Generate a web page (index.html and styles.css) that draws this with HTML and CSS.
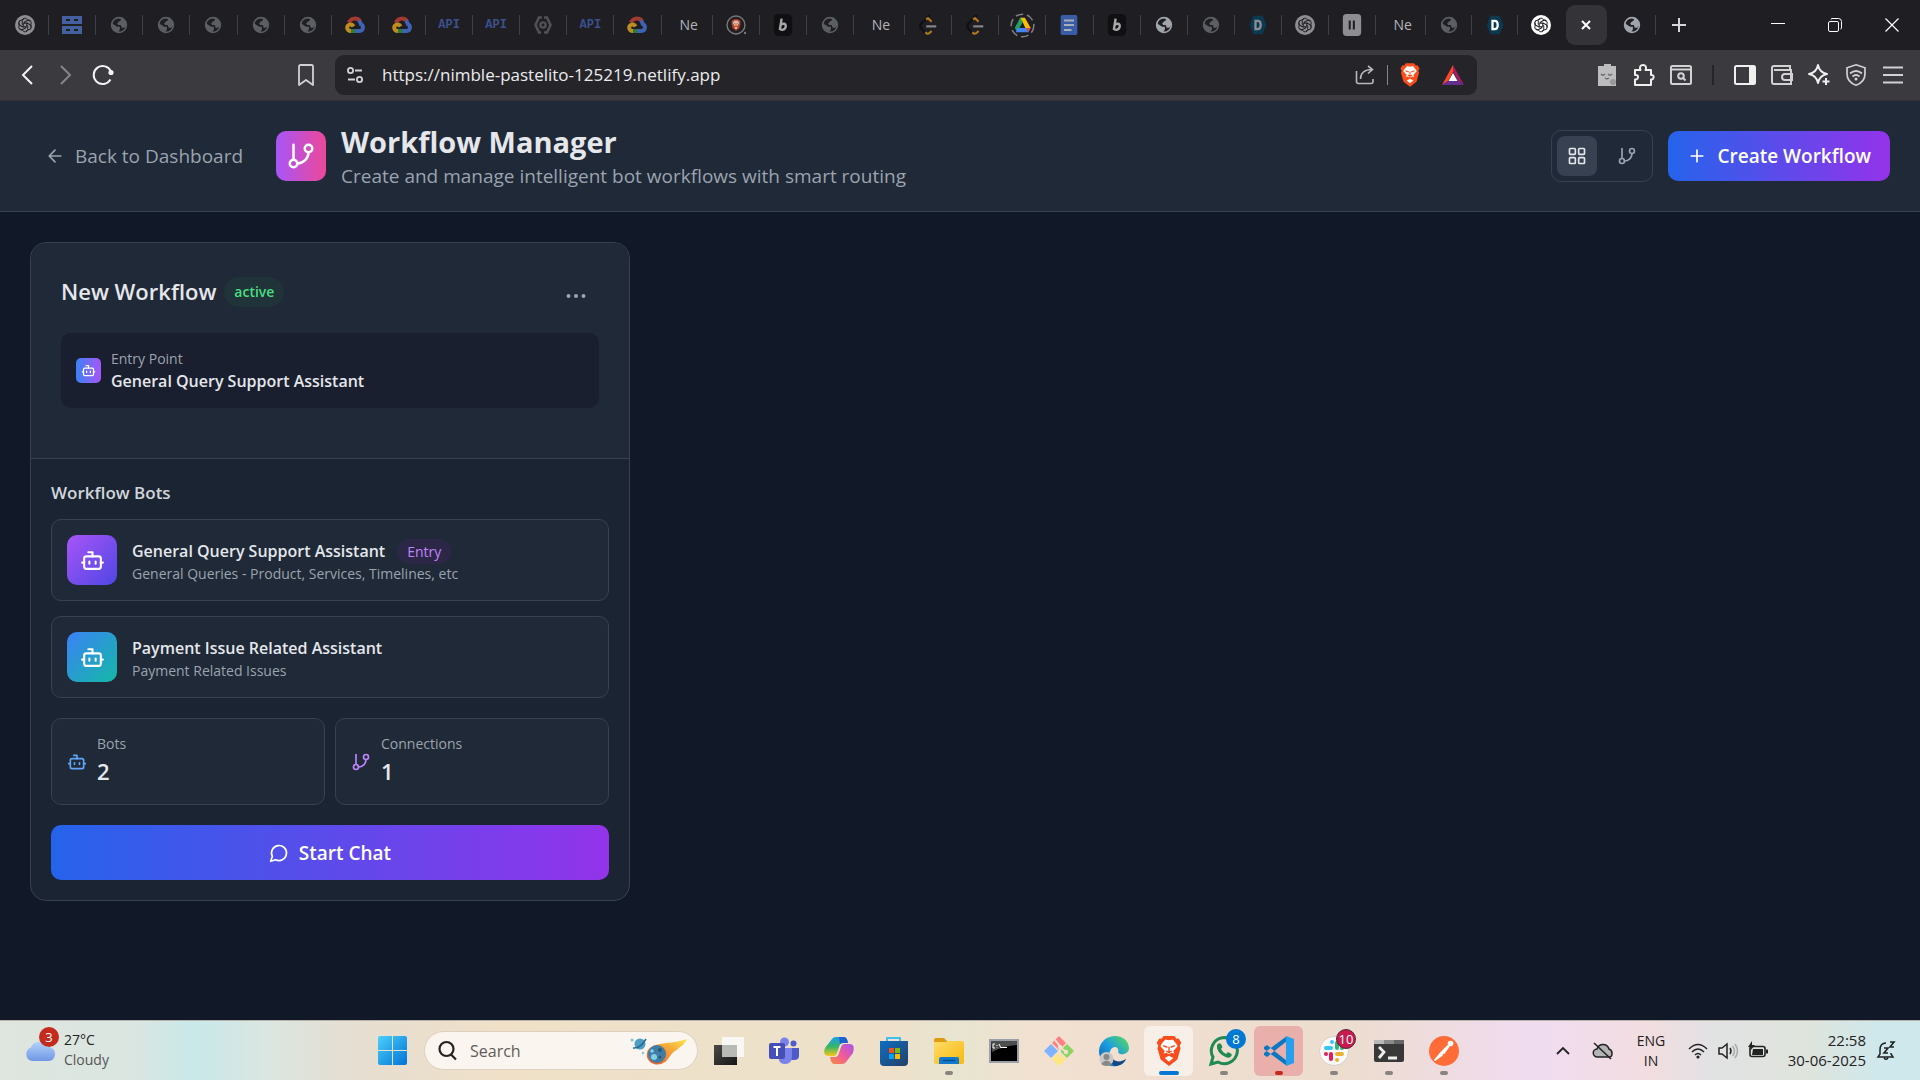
FILE: index.html
```html
<!DOCTYPE html>
<html lang="en">
<head>
<meta charset="utf-8">
<title>Workflow Manager</title>
<link rel="stylesheet" href="styles.css">
</head>
<body>
<svg class="sprite" aria-hidden="true">
  <defs>
    <linearGradient id="g-win" x1="0" y1="0" x2="1" y2="1"><stop offset="0" stop-color="#4cd0fb"/><stop offset="1" stop-color="#0073d6"/></linearGradient>
    <linearGradient id="g-edge" x1="0" y1="1" x2="1" y2="0"><stop offset="0" stop-color="#0c59a4"/><stop offset=".5" stop-color="#1b9de2"/><stop offset="1" stop-color="#5be04f"/></linearGradient>
    <linearGradient id="g-copA" x1="0" y1="0" x2="0" y2="1"><stop offset="0" stop-color="#15a0ee"/><stop offset=".5" stop-color="#35b56a"/><stop offset="1" stop-color="#f5c816"/></linearGradient>
    <linearGradient id="g-copB" x1="1" y1="0" x2="0" y2="1"><stop offset="0" stop-color="#a455ee"/><stop offset=".5" stop-color="#ee5a9c"/><stop offset="1" stop-color="#fb8a3c"/></linearGradient>
    <linearGradient id="g-store" x1="0" y1="0" x2="1" y2="1"><stop offset="0" stop-color="#0c6fc4"/><stop offset="1" stop-color="#263f68"/></linearGradient>
    <linearGradient id="g-folder" x1="0" y1="0" x2="1" y2="1"><stop offset="0" stop-color="#ffdc68"/><stop offset="1" stop-color="#f8b80e"/></linearGradient>
    <linearGradient id="g-flame" x1="0" y1="1" x2="1" y2="0"><stop offset="0" stop-color="#e8502c"/><stop offset=".5" stop-color="#f59a34"/><stop offset="1" stop-color="#fbe64a"/></linearGradient>
    <linearGradient id="g-cloud" x1="0" y1="0" x2="0" y2="1"><stop offset="0" stop-color="#b4d2fa"/><stop offset="1" stop-color="#6f98e6"/></linearGradient>
    <linearGradient id="g-dark" x1="0" y1="0" x2="1" y2="1"><stop offset="0" stop-color="#4a4a48"/><stop offset="1" stop-color="#161616"/></linearGradient>
  </defs>
  <symbol id="knot" viewBox="0 0 24 24"><circle cx="12" cy="12" r="12" fill="currentColor"/><g fill="none" stroke="#222226" stroke-width="1.2"><path id="knot-a" d="M12 9.5 8.7 11.3V6.8A3.2 3.2 0 0 1 14.6 5.3L18 7.4"/><use href="#knot-a" transform="rotate(60 12 12)"/><use href="#knot-a" transform="rotate(120 12 12)"/><use href="#knot-a" transform="rotate(180 12 12)"/><use href="#knot-a" transform="rotate(240 12 12)"/><use href="#knot-a" transform="rotate(300 12 12)"/></g></symbol>
  <symbol id="servers" viewBox="0 0 20 20"><path fill="#45609f" d="M0 1h20v8H0zM0 11h20v8H0z"/><path fill="#1f1e23" d="M4 4h4v2H4zM12 4h4v2h-4zM4 14h4v2H4zM12 14h4v2h-4z"/></symbol>
  <symbol id="globe" viewBox="0 0 20 20"><circle cx="10" cy="10" r="8.2" fill="none" stroke="currentColor" stroke-width="1.8"/><path fill="currentColor" d="M9 2c5-1 9 3 9 8l-2 3h-3l-1-3H9l-1-2 2-2 2-1V3zM2 8l6 4h3v3l-2 3C4 18 1 13 2 8z"/></symbol>
  <symbol id="gcloud" viewBox="0 0 20 18"><g fill="none" stroke-width="4"><path stroke="#a23a30" d="M3.8 6.6A6.6 6.6 0 0 1 15 5"/><path stroke="#3e63b4" d="M14 4.5C15.3 6 15.5 7 15.8 8 19 9.5 18.5 15 14.5 15H10"/><path stroke="#2d7a40" d="M10.500 15H5.500"/><path stroke="#bd8d20" d="M6 15C1 15 1 8.500 5.500 8.500 7 8.500 8 9.500 8.500 10.500"/></g></symbol>
  <symbol id="hexgear" viewBox="0 0 20 20"><path d="M9 2.500H6L2.500 10 6 17.500h2M11 2.500h3L17.500 10 14 17.500h-3" fill="none" stroke="#505055" stroke-width="2.600"/><circle cx="10" cy="10" r="2.600" fill="none" stroke="#505055" stroke-width="2.400"/></symbol>
  <symbol id="lion" viewBox="0 0 24 28"><path fill="#fb4d1c" d="M7 0h10l2 2.500 2-.2 2.500 4L22 9l.8 2.500-3 10.500L12 28l-7.800-6L1.200 11.500 2 9 .5 6.300 3 2.300l2 .2z"/><path fill="#fff" d="m12 4 3.500-.8L19 7.500l1 2-4 4.500 1 2.500-2.500-.8L12 17l-2.500-1.300-2.500.8L8 14 4 9.500l1-2 3.500-4.300zM12 18.500l4 2-4 3.500-4-3.500z"/><path stroke="#fb4d1c" stroke-width="1.300" fill="none" d="m6.500 9 4 1.500M17.500 9l-4 1.500M12 10v5M9.500 14l2.500 1.500 2.500-1.500"/></symbol>
  <symbol id="bsq" viewBox="0 0 20 24"><rect width="20" height="24" rx="5" fill="#101012"/><path d="M8.500 5 6.500 17.500M7.300 12.500C9 9.800 13.500 9.800 13 13.500 12.500 17.500 8 18.200 6.500 16" fill="none" stroke="#a8a8aa" stroke-width="2.600"/></symbol>
  <symbol id="leet" viewBox="0 0 20 24"><g fill="none" stroke-width="2.400"><path stroke="#101012" d="M12 1 3 10c-2 2-2 4 0 6l4 5"/><path stroke="#ad7621" d="m8 6 2-1.500 4 4M7 20l2 1.500c2 .5 3-1 5-3"/><path stroke="#85858a" d="M8 13.500h11"/></g></symbol>
  <symbol id="drive" viewBox="0 0 26 26"><circle cx="13" cy="13" r="11.800" fill="none" stroke="#7d7d82" stroke-width="1.600" stroke-dasharray="8 4"/><path fill="#1ea362" d="M10.500 5h3l-1 6-5 8.500-2.500-4z"/><path fill="#fbbc04" d="M11 5h4.500l6 10.500H16z"/><path fill="#4285f4" d="M8 15.500h13.500L19 20H6z"/><path fill="#ea4335" d="M17 15.500h4.500L19 20z"/></symbol>
  <symbol id="docs" viewBox="0 0 20 24"><rect width="20" height="24" rx="2" fill="#3a5ca6"/><path stroke="#a9adb6" stroke-width="2.400" d="M4 6.500h12M4 12h12M4 18h9"/></symbol>
  <symbol id="dhex" viewBox="0 0 20 24"><path fill="#0b3a50" d="M4.500 1h11L20 12l-4.500 11h-11L0 12z"/><path fill="none" stroke="currentColor" stroke-width="2.800" d="M7 7h2.500c5 0 5 10 0 10H7z"/></symbol>
  <symbol id="pausesq" viewBox="0 0 20 24"><rect width="20" height="24" rx="4" fill="#8e8e92"/><path stroke="#1f1e23" stroke-width="2.200" d="M7.500 7v10M12 7v10"/></symbol>
  <symbol id="branch" viewBox="0 0 24 24"><g fill="none" stroke="currentColor" stroke-width="2" stroke-linecap="round"><path d="M6 3v12"/><circle cx="18" cy="6" r="3"/><circle cx="6" cy="18" r="3"/><path d="M18 9a9 9 0 0 1-9 9"/></g></symbol>
  <symbol id="bot" viewBox="0 0 24 24"><g fill="none" stroke="currentColor" stroke-width="2" stroke-linecap="round" stroke-linejoin="round"><path d="M12 8V4H8"/><rect x="4" y="8" width="16" height="12" rx="2"/><path d="M2 14h2M20 14h2M15 13v2M9 13v2"/></g></symbol>
</svg>

<header class="browser">
  <div class="tabstrip">
    <div class="tabs">
      <button class="tab dim"><svg class="i20"><use href="#knot"/></svg></button>
      <button class="tab"><svg class="i20"><use href="#servers"/></svg></button>
      <button class="tab"><svg class="globe"><use href="#globe"/></svg></button>
      <button class="tab"><svg class="globe"><use href="#globe"/></svg></button>
      <button class="tab"><svg class="globe"><use href="#globe"/></svg></button>
      <button class="tab"><svg class="globe"><use href="#globe"/></svg></button>
      <button class="tab"><svg class="globe"><use href="#globe"/></svg></button>
      <button class="tab"><svg class="i20"><use href="#gcloud"/></svg></button>
      <button class="tab"><svg class="i20"><use href="#gcloud"/></svg></button>
      <button class="tab api">API</button>
      <button class="tab api">API</button>
      <button class="tab"><svg class="i20"><use href="#hexgear"/></svg></button>
      <button class="tab api">API</button>
      <button class="tab"><svg class="i20"><use href="#gcloud"/></svg></button>
      <button class="tab title">Ne</button>
      <button class="tab"><svg class="i20" viewBox="0 0 20 20"><circle cx="10" cy="10" r="9" fill="none" stroke="#77777c" stroke-width="1.400"/><svg x="5" y="4" width="10" height="12"><use href="#lion" opacity=".75"/></svg><circle cx="19" cy="18" r="1.200" fill="#77777c"/></svg></button>
      <button class="tab"><svg class="i22"><use href="#bsq"/></svg></button>
      <button class="tab"><svg class="globe"><use href="#globe"/></svg></button>
      <button class="tab title">Ne</button>
      <button class="tab"><svg class="i22"><use href="#leet"/></svg></button>
      <button class="tab"><svg class="i22"><use href="#leet"/></svg></button>
      <button class="tab"><svg class="i25"><use href="#drive"/></svg></button>
      <button class="tab"><svg class="i20"><use href="#docs"/></svg></button>
      <button class="tab"><svg class="i22"><use href="#bsq"/></svg></button>
      <button class="tab"><svg class="globe lit"><use href="#globe"/></svg></button>
      <button class="tab"><svg class="globe"><use href="#globe"/></svg></button>
      <button class="tab dim"><svg class="i20"><use href="#dhex"/></svg></button>
      <button class="tab dim"><svg class="i20"><use href="#knot"/></svg></button>
      <button class="tab"><svg class="i22"><use href="#pausesq"/></svg></button>
      <button class="tab late title">Ne</button>
      <button class="tab late"><svg class="globe"><use href="#globe"/></svg></button>
      <button class="tab late white"><svg class="i20"><use href="#dhex"/></svg></button>
      <button class="tab late white bare"><svg class="i20"><use href="#knot"/></svg></button>
      <button class="tab late white bare" aria-label="Close tab"><span class="chip"><svg class="i12" viewBox="0 0 12 12"><path d="m2 2 8 8M10 2l-8 8" stroke="currentColor" stroke-width="2"/></svg></span></button>
      <button class="tab late"><svg class="globe lit"><use href="#globe"/></svg></button>
    </div>
    <div class="window-controls">
      <button class="new-tab" aria-label="New tab"><svg class="i14" viewBox="0 0 14 14"><path d="M7 0v14M0 7h14" stroke="#d6d6d8" stroke-width="2"/></svg></button>
      <button class="wc" aria-label="Minimize"><svg class="i14" viewBox="0 0 14 14"><path d="M0 5.500h14" stroke="#fff"/></svg></button>
      <button class="wc" aria-label="Restore"><svg class="i14" viewBox="0 0 14 14"><g fill="none" stroke="#fff"><rect x=".5" y="3.500" width="10" height="10" rx="1.500"/><path d="M3 1.500c0-.6.5-1 1-1h6.500a3 3 0 0 1 3 3V10c0 .5-.4 1-1 1"/></g></svg></button>
      <button class="wc" aria-label="Close"><svg class="i14" viewBox="0 0 14 14"><path d="m.5.5 13 13M13.500.5l-13 13" stroke="#fff" stroke-width="1.200"/></svg></button>
    </div>
  </div>

  <div class="toolbar">
    <div class="nav-buttons">
      <button aria-label="Back"><svg class="i20" viewBox="0 0 20 20"><path d="M14 1 5 10l9 9" fill="none" stroke="#f3f3f4" stroke-width="2"/></svg></button>
      <button aria-label="Forward"><svg class="i20" viewBox="0 0 20 20"><path d="m6 1 9 9-9 9" fill="none" stroke="#85858a" stroke-width="2"/></svg></button>
      <button aria-label="Reload"><svg class="i22" viewBox="0 0 22 22"><path d="M18.500 15.500A9 9 0 1 1 19 7.500" fill="none" stroke="#f3f3f4" stroke-width="2"/><circle cx="19" cy="8.500" r="2.600" fill="#f3f3f4"/></svg></button>
    </div>
    <button class="bookmark" aria-label="Bookmark"><svg class="i22" viewBox="0 0 22 22"><path d="M4 2.500C4 1.700 4.700 1 5.500 1h11c.8 0 1.500.7 1.500 1.500V21l-7-5-7 5z" fill="none" stroke="#d2d2d4" stroke-width="1.800" stroke-linejoin="round"/></svg></button>
    <div class="address">
      <svg class="i18" viewBox="0 0 18 18"><g fill="none" stroke="#d2d2d4" stroke-width="1.800"><circle cx="4.500" cy="4.500" r="2.600"/><path d="M9 4.500h7M2 13.500h7"/><circle cx="13.500" cy="13.500" r="2.600"/></g></svg>
      <input class="url" type="text" aria-label="Address" value="https://nimble-pastelito-125219.netlify.app">
      <button aria-label="Share"><svg class="i20" viewBox="0 0 20 20"><g fill="none" stroke="#b9b9bc" stroke-width="1.600"><path d="M1.500 6v10.500c0 1.200.8 2 2 2H16c1.200 0 2-.8 2-2V14"/><path d="M5.500 14c0-6 4-9.500 11.500-9.500M13 1l4.500 3.500L13 8.500"/></g></svg></button>
      <span class="rule"></span>
      <button aria-label="Shields"><svg class="lion"><use href="#lion"/></svg></button>
      <button aria-label="Rewards"><svg class="i22" viewBox="0 0 22 20"><path fill="#ff4724" d="M11 0 0 20l6-4 5-9z"/><path fill="#9e1f63" d="m11 0 11 20-6-4-5-9z"/><path fill="#662d91" d="M0 20h22l-6-4H6z"/><path fill="#fff" d="m11 8 4.500 8h-9z"/></svg></button>
    </div>
    <div class="tools">
      <button aria-label="Extension"><svg class="i22" viewBox="0 0 22 22"><path fill="#bcbcbe" d="M8 0h7v2h5v20H2V2h6z"/><path d="M5 10q2 2.500 4 0M12 10q2 2.500 4 0M9 14q2 1.500 4 0" stroke="#6a6a6e" fill="none" stroke-width="1.300"/><circle cx="17" cy="18" r="3" fill="#98989c"/></svg></button>
      <button aria-label="Extensions"><svg class="i22" viewBox="0 0 22 22"><path d="M2 6h5.500C6 3 7.500 1 10 1s4 2 2.500 5H18v5c3.500-1 3.500 5 0 4.500V21H2v-5.500c4 .5 4-5.500 0-4.500z" fill="none" stroke="#f0f0f1" stroke-width="2" stroke-linejoin="round"/></svg></button>
      <button aria-label="Search page"><svg class="i22" viewBox="0 0 22 22"><g fill="none" stroke="#d2d2d4" stroke-width="2"><rect x="1" y="2" width="20" height="18" rx="1.500"/><path d="M1 5.500h20"/><circle cx="11" cy="12" r="2.800"/><path d="m13 14 2.500 2.500"/></g></svg></button>
      <span class="rule dark"></span>
      <button aria-label="Side panel"><svg class="i22" viewBox="0 0 22 22"><rect x="1" y="2" width="20" height="18" rx="1.500" fill="none" stroke="#f0f0f1" stroke-width="2"/><path fill="#f0f0f1" d="M15 2h6v18h-6z"/></svg></button>
      <button aria-label="Wallet"><svg class="i22" viewBox="0 0 22 22"><g fill="none" stroke="#d2d2d4" stroke-width="2"><path d="M19 6V2H3a2 2 0 0 0-2 2v14a2 2 0 0 0 2 2h17V6H3"/><path d="M21 10h-7a2.500 2.500 0 0 0 0 6h7z"/></g></svg></button>
      <button aria-label="Assistant"><svg class="i22" viewBox="0 0 22 22"><path d="M10 1q1.500 7.500 9 9-7.500 1.500-9 9-1.500-7.500-9-9 7.500-1.500 9-9z" fill="none" stroke="#f0f0f1" stroke-width="1.900" stroke-linejoin="round"/><path d="M18 14v7M14.500 17.500h7" stroke="#f0f0f1" stroke-width="2"/></svg></button>
      <button aria-label="VPN"><svg class="i22" viewBox="0 0 22 22"><g fill="none" stroke="#d2d2d4" stroke-width="1.700"><path d="m11 .8 9 3v6c0 5-3.500 9.500-9 11.500-5.500-2-9-6.500-9-11.500v-6z"/><path d="M5 9.500q6-5 12 0M7.500 12.500q3.500-3 7 0"/></g><circle cx="11" cy="15" r="1.500" fill="#d2d2d4"/></svg></button>
      <button aria-label="Menu"><svg class="i22" viewBox="0 0 22 22"><path d="M1 3.500h20M1 11h20M1 18.500h20" stroke="#d2d2d4" stroke-width="1.800"/></svg></button>
    </div>
  </div>
</header>

<div class="app">
  <header class="app-header">
    <a class="back" href="#"><svg class="i20" viewBox="0 0 24 24"><path d="m12 19-7-7 7-7M19 12H5" fill="none" stroke="currentColor" stroke-width="2" stroke-linecap="round" stroke-linejoin="round"/></svg>Back to Dashboard</a>
    <div class="brand">
      <span class="logo"><svg class="i30"><use href="#branch"/></svg></span>
      <div class="text">
        <h1>Workflow Manager</h1>
        <p>Create and manage intelligent bot workflows with smart routing</p>
      </div>
    </div>
    <div class="header-actions">
      <div class="toggle">
        <button class="on" aria-label="Grid view"><svg class="i20" viewBox="0 0 24 24"><g fill="none" stroke="currentColor" stroke-width="2"><rect x="3" y="3" width="7" height="7" rx="1"/><rect x="14" y="3" width="7" height="7" rx="1"/><rect x="14" y="14" width="7" height="7" rx="1"/><rect x="3" y="14" width="7" height="7" rx="1"/></g></svg></button>
        <button aria-label="Flow view"><svg class="i20"><use href="#branch"/></svg></button>
      </div>
      <button class="create"><svg class="i20" viewBox="0 0 24 24"><path d="M5 12h14M12 5v14" stroke="currentColor" stroke-width="2" stroke-linecap="round"/></svg>Create Workflow</button>
    </div>
  </header>

  <main class="board">
    <article class="card">
      <div class="card-top">
        <div class="card-title">
          <h2>New Workflow</h2><span class="status">active</span>
          <button class="more" aria-label="More options"><svg class="i20" viewBox="0 0 20 20"><g fill="currentColor"><circle cx="2.500" cy="10" r="2"/><circle cx="10" cy="10" r="2"/><circle cx="17.500" cy="10" r="2"/></g></svg></button>
        </div>
        <div class="entry">
          <span class="entry-icon"><svg class="i15"><use href="#bot"/></svg></span>
          <div class="text"><p class="label">Entry Point</p><p class="name">General Query Support Assistant</p></div>
        </div>
      </div>
      <div class="card-body">
        <h3>Workflow Bots</h3>
        <ul class="bots">
          <li class="bot"><span class="bot-icon violet"><svg class="i25"><use href="#bot"/></svg></span>
            <div class="text"><p class="name">General Query Support Assistant<span class="tag">Entry</span></p><p class="label">General Queries - Product, Services, Timelines, etc</p></div></li>
          <li class="bot"><span class="bot-icon teal"><svg class="i25"><use href="#bot"/></svg></span>
            <div class="text"><p class="name">Payment Issue Related Assistant</p><p class="label">Payment Related Issues</p></div></li>
        </ul>
        <div class="stats">
          <div class="stat"><svg class="i20 blue"><use href="#bot"/></svg><div><p class="label">Bots</p><p class="count">2</p></div></div>
          <div class="stat"><svg class="i20 purple"><use href="#branch"/></svg><div><p class="label">Connections</p><p class="count">1</p></div></div>
        </div>
        <button class="start"><svg class="i20" viewBox="0 0 24 24"><path d="M7.900 20A9 9 0 1 0 4 16.100L2 22Z" fill="none" stroke="currentColor" stroke-width="2" stroke-linejoin="round"/></svg>Start Chat</button>
      </div>
    </article>
  </main>
</div>

<footer class="taskbar">
  <button class="weather">
    <span class="weather-icon"><svg viewBox="0 0 30 22"><path fill="url(#g-cloud)" d="M7 21a7 7 0 0 1-1-13.500C8 1 19-1 22 7c6-.5 8 4 8 7s-2 7-6 7z"/></svg><span class="badge red">3</span></span>
    <span class="weather-text">27°C<small>Cloudy</small></span>
  </button>
  <nav class="dock" aria-label="Taskbar">
    <button class="winstart" aria-label="Start"><svg viewBox="0 0 29 29"><path fill="url(#g-win)" d="M2 0h12v14H0V2q0-2 2-2zM15 0h12q2 0 2 2v12H15zM0 15h14v14H2q-2 0-2-2zM15 15h14v12q0 2-2 2H15z"/></svg></button>
    <label class="search"><svg class="i20" viewBox="0 0 20 20"><g fill="none" stroke="#222" stroke-width="2.200"><circle cx="8.500" cy="8" r="7"/><path d="m13 13.500 5 5"/></g></svg>
      <input type="text" placeholder="Search" aria-label="Search">
      <svg class="comet" viewBox="0 0 58 28"><circle cx="10" cy="7" r="5.500" fill="#4f9fc4"/><path d="M3 11Q10 12 16 2" stroke="#2a6c92" stroke-width="1.500" fill="none"/><circle cx="2" cy="3" r="1.500" fill="#7fc4de"/><circle cx="13" cy="16" r="1.200" fill="#7fc4de"/><path fill="url(#g-flame)" d="M18 13C25 4 40 8 57 2 53 10 50 9 47 13c-5 1-8 9-12 12-10 7-22-2-17-12z"/><circle cx="27" cy="17" r="9" fill="#3f7da6"/><circle cx="24" cy="20" r="3" fill="#83cfe4"/><circle cx="30" cy="13" r="2" fill="#285874"/><circle cx="22" cy="14" r="1.800" fill="#83cfe4"/><circle cx="30" cy="20" r="1.500" fill="#285874"/></svg>
    </label>
    <button class="app-btn" aria-label="Task view"><svg viewBox="0 0 30 30"><path fill="url(#g-dark)" d="M0 9h23v20H0z"/><path fill="#fafafa" fill-opacity=".85" d="M8 1h22v20H8z"/><path fill="#b9b9b5" d="M8 9h15v12H8z"/></svg></button>
    <button class="app-btn" aria-label="Teams"><svg viewBox="0 0 30 30"><circle cx="15.500" cy="6" r="4.500" fill="#7b83eb"/><circle cx="24.500" cy="7.500" r="3" fill="#5059c9"/><path fill="#5059c9" d="M21 12h9v8q0 4-5 4h-4z"/><path fill="#7b83eb" d="M10 12h13v8q0 8-7 8-5 0-6-4z"/><rect y="7" width="16" height="16" rx="2" fill="#464eb8"/><path d="M4.500 11h7M8 11v9" stroke="#fff" stroke-width="2"/></svg></button>
    <button class="app-btn" aria-label="Copilot"><svg viewBox="0 0 30 30"><path fill="url(#g-copA)" d="M8 3q1-2 4-2h8q3 0 4 6h-5q-3 0-4 4l-2 6q-1 3-3 3H5c-6 0-5-5-4-8z"/><path fill="#1f5fd0" d="M15 1h5q3 0 4 6h-5q-2 0-3 1z"/><path fill="url(#g-copB)" d="M22 26q-1 2-4 2h-8q-3 0-4-7h5q3 0 4-4l2-6q1-3 3-3h5c6 0 5 5 4 9z"/></svg></button>
    <button class="app-btn" aria-label="Store"><svg viewBox="0 0 30 30"><path d="M8 6V2h13v4" fill="none" stroke="#3fc0f0" stroke-width="2"/><path fill="url(#g-store)" d="M1 5h28v21q0 4-4 4H5q-4 0-4-4z"/><path fill="#f25022" d="M10 12h5v5h-5z"/><path fill="#7fba00" d="M16 12h5v5h-5z"/><path fill="#00a4ef" d="M10 18h5v5h-5z"/><path fill="#ffb900" d="M16 18h5v5h-5z"/></svg></button>
    <button class="app-btn run" aria-label="File Explorer"><svg viewBox="0 0 30 30"><path fill="#dc9b10" d="M0 4q0-2 2-2h8l4 4H0z"/><path fill="url(#g-folder)" d="M0 6h11l3-1h14q2 0 2 2v19q0 2-2 2H2q-2 0-2-2z"/><path fill="#1379ca" d="M5 28v-5q0-2 2-2h16q2 0 2 2v5z"/><path d="M9 24.500h12" stroke="#0a4f94" stroke-width="1.500"/></svg></button>
    <button class="app-btn" aria-label="Command Prompt"><svg viewBox="0 0 30 30"><rect x="1" y="4" width="28" height="22" fill="#000" stroke="#9aa0a8" stroke-width="2"/><path d="M2 5h26v4Q14 10 3 16z" fill="#4d4d4d"/><path d="M6 8H4v4h2M8 9v1M8 12v-.5M10 8l2 4M12 11.500h6" stroke="#fff" fill="none"/></svg></button>
    <button class="app-btn" aria-label="Git"><svg viewBox="0 0 30 30"><path fill="#ff8080" d="m15 0 7 7-7 7-7-7z"/><path fill="#80b3ff" d="m7 8 7 7-7 7-7-7z"/><path fill="#8cd35f" d="m23 8 7 7-7 7-7-7z"/><path fill="#ffe680" d="m15 16 7 7-7 7-7-7z"/><path d="m11 4 5 6v12M16 11l6 5" stroke="#f2e0d0" stroke-width="2" fill="none"/><circle cx="16" cy="11" r="2.200" fill="#f2e0d0"/><circle cx="22" cy="16" r="2.200" fill="#f2e0d0"/></svg></button>
    <button class="app-btn" aria-label="Edge"><svg viewBox="0 0 30 30"><path fill="url(#g-edge)" d="M0 15C1-4 29-5 30 12c0 5-5 7-9 6-3-1-1-3-2-5-3-5-10 0-8 7 2 8 10 8 16 3-3 6-9 8-14 7C5 29 0 23 0 15z"/><path fill="#134a86" d="M12 20c2 6 9 7 15 3-2 5-7 7-11 7-4-2-5-6-4-10z"/><circle cx="7.500" cy="23" r="7" fill="#c9c9c9"/><circle cx="7.500" cy="21" r="3" fill="#888"/><path d="M2 28q5.500-7 11 0-5.500 4-11 0z" fill="#888"/></svg></button>
    <button class="app-btn current" aria-label="Brave"><svg viewBox="0 0 24 28"><use href="#lion" width="24" height="28"/></svg></button>
    <button class="app-btn run" aria-label="WhatsApp"><svg viewBox="0 0 30 30"><path d="M2 28l2-7A13 13 0 1 1 9 26z" fill="none" stroke="#1f8a54" stroke-width="3"/><path fill="#1f8a54" d="M8 9q2-3 4-1l1.500 3-1.500 2q2 4 5 5l2-2 3.500 2q1 1-1 3-2 1.500-5 0-7-3-8.500-9z"/></svg><span class="badge blue-bg">8</span></button>
    <button class="app-btn alert" aria-label="VS Code"><svg viewBox="0 0 30 30"><path fill="#0b78c4" d="m0 19 3 2L23 5V0L0 17zM0 11l3-2 20 16v5L0 13z"/><path fill="#26a0ee" d="m22 0 8 3v24l-8 3z"/></svg></button>
    <button class="app-btn run" aria-label="Slack"><svg viewBox="0 0 30 30"><circle cx="15" cy="15" r="14.500" fill="#fafafa" stroke="#d9cfc8"/><g stroke-width="4" stroke-linecap="round"><path stroke="#36c5f0" d="M7 12h5M13 6v0"/><path stroke="#2eb67d" d="M18 7v5M23 12v0"/><path stroke="#ecb22e" d="M18 18h5M18 24v0"/><path stroke="#e01e5a" d="M12 18v5M7 18v0"/></g></svg><span class="badge pink">10</span></button>
    <button class="app-btn run" aria-label="Terminal"><svg viewBox="0 0 30 30"><rect y="4" width="30" height="22" rx="2" fill="#383838"/><path fill="#b8b8b8" d="M0 4h10v4H0z"/><path fill="#8a8a8a" d="M10 4h10v4H10z"/><path fill="#666" d="M20 4h10v4H20z"/><path d="m5 11 5 5-5 6M14 22h9" stroke="#eee" stroke-width="2.800" fill="none"/></svg></button>
    <button class="app-btn run" aria-label="Postman"><svg viewBox="0 0 30 30"><circle cx="15" cy="15" r="15" fill="#ff6c37"/><path d="m19 10-8 8 4-1 5-7M11 18l-5 6 7-5" stroke="#fff" stroke-width="1.800" stroke-linecap="round" stroke-linejoin="round" fill="none"/><circle cx="21.500" cy="7.500" r="2.800" fill="#fff"/></svg></button>
  </nav>
  <div class="tray">
    <button class="tray-btn" aria-label="Show hidden icons"><svg class="i14" viewBox="0 0 14 14"><path d="m1 10 6-6 6 6" fill="none" stroke="#222" stroke-width="1.800"/></svg></button>
    <button class="tray-btn" aria-label="Cloud sync"><svg class="i20" viewBox="0 0 20 20"><path d="M4.500 16a4 4 0 0 1-.5-8c2-6 10-6 12 0 4 1 4 8 0 8z" fill="#b4b4b4" stroke="#222" stroke-width="1.500"/><path d="m1 2 17 16" stroke="#222" stroke-width="1.600"/></svg></button>
    <button class="lang">ENG<br>IN</button>
    <button class="system" aria-label="Network, volume and battery">
      <svg class="i20" viewBox="0 0 20 20"><g fill="none" stroke="#222" stroke-width="1.600"><path d="M1 8q9-9 18 0M4 11q6-6 12 0M7 14q3-3 6 0"/></g><circle cx="10" cy="16" r="1.600" fill="#222"/></svg>
      <svg class="i20" viewBox="0 0 20 20"><g fill="none" stroke="#222" stroke-width="1.500"><path d="M1 7h3l5-4v14l-5-4H1z"/><path d="M12 7q2 3 0 6"/><path stroke="#aaa" d="M14.500 5q4 5 0 10M17 3q5 7 0 14"/></g></svg>
      <svg class="i20" viewBox="0 0 20 20"><rect x="2" y="5.500" width="15" height="10" rx="2" fill="none" stroke="#222" stroke-width="1.600"/><path fill="#222" d="M5 8h10v6H4zM18 8.500h2v4h-2zM4 0 0 6h3L2 10l5-6H4z"/></svg>
    </button>
    <button class="clock">22:58<br>30-06-2025</button>
    <button class="bell" aria-label="Notifications"><svg class="i20" viewBox="0 0 20 20"><path d="M10 2C5 2 4 6 4 9v4l-2 3h15l-2-3v-1M8 17q2 2.500 4 0" fill="none" stroke="#222" stroke-width="1.500"/><path d="M8 7h4l-4 5h4M14 1h4l-4 5h4" fill="none" stroke="#222" stroke-width="1.600"/></svg></button>
  </div>
</footer>
</body>
</html>
```
FILE: styles.css
```css
* { box-sizing: border-box; }
html, body { height: 100%; }
body {
  margin: 0;
  display: flex;
  flex-direction: column;
  min-height: 100vh;
  font-family: "Open Sans", "Noto Sans", sans-serif;
  background: #111827;
  color: #e5e7eb;
}
h1, h2, h3, p, ul { margin: 0; padding: 0; }
ul { list-style: none; }
button { border: 0; padding: 0; background: none; color: inherit; font: inherit; }
input { border: 0; padding: 0; background: none; outline: 0; min-width: 0; }
svg { display: block; flex: none; overflow: visible; }
.sprite { position: absolute; width: 0; height: 0; }
.i12 { width: 12px; height: 12px; }
.i14 { width: 14px; height: 14px; }
.i15 { width: 15px; height: 15px; }
.i18 { width: 18px; height: 18px; }
.i20 { width: 20px; height: 20px; }
.i22 { width: 22px; height: 22px; }
.i25 { width: 25px; height: 25px; }
.i30 { width: 30px; height: 30px; }

/* Browser tab strip */
.tabstrip { display: flex; height: 50px; background: #1f1e23; }
.tabs { flex: 1; display: flex; align-items: center; padding-left: 2px; }
.tab {
  flex: 40 1 0;
  min-width: 0;
  height: 20px;
  display: flex;
  align-items: center;
  justify-content: center;
  border-right: 1px solid #403f45;
}
.tab.late { flex-grow: 39; }
.tab.bare { border-color: transparent; }
.dim { color: #8e8e92; }
.white { color: #fff; }
.globe { width: 18px; height: 18px; color: #5b5f64; }
.globe.lit { color: #a0a5ab; }
.api { font: 700 12px/20px "Liberation Mono", monospace; color: #3b508d; }
.title { font-size: 14px; line-height: 20px; color: #b4b4b7; padding-left: 4px; }
.chip {
  flex: none;
  width: 41px;
  height: 40px;
  display: grid;
  place-items: center;
  background: #343338;
  border-radius: 9px;
}
.window-controls { width: 264px; display: flex; align-items: center; }
.new-tab { width: 46px; display: grid; place-items: center; margin-right: auto; }
.wc { width: 57px; display: grid; place-items: center; }

/* Browser toolbar */
.toolbar {
  display: flex;
  align-items: center;
  height: 51px;
  background: #3b3a3f;
  border-bottom: 1px solid #323136;
  padding-right: 16px;
}
.nav-buttons { display: flex; gap: 17px; padding-left: 18px; width: 295px; align-items: center; }
.bookmark { width: 22px; margin-right: 18px; }
.address {
  flex: 1;
  height: 40px;
  display: flex;
  align-items: center;
  gap: 12px;
  padding: 0 13px 0 11px;
  background: #252429;
  border-radius: 9px;
}
.url { flex: 1; font: 17px/24px "Open Sans", sans-serif; color: #ececee; padding-left: 6px; }
.rule { width: 1px; height: 20px; background: #85858a; }
.rule.dark { width: 2px; background: #252429; }
.lion { width: 20px; height: 24px; }
.address button + button { margin-left: 10px; }
.tools { display: flex; align-items: center; gap: 15px; margin-left: 119px; }
.tools .rule { margin: 0 5px; }

/* App header */
.app { flex: 1; }
.app-header {
  display: flex;
  align-items: center;
  height: 111px;
  padding: 0 30px 0 45px;
  background: #1f2937;
  border-bottom: 1px solid #374151;
}
.back {
  display: flex;
  align-items: center;
  gap: 10px;
  font-size: 19px;
  line-height: 30px;
  color: #9ca3af;
  text-decoration: none;
}
.text { padding-top: 2px; }
.brand { display: flex; align-items: center; gap: 15px; margin-left: 33px; }
.logo {
  width: 50px;
  height: 50px;
  display: grid;
  place-items: center;
  border-radius: 10px;
  color: #fff;
  background: linear-gradient(90deg, #a855f7, #ec4899);
}
h1 { font-size: 29px; line-height: 38px; font-weight: 700; }
.brand p { font-size: 19px; line-height: 30px; color: #9ca3af; }
.header-actions { display: flex; align-items: center; gap: 15px; margin-left: auto; }
.toggle { display: flex; gap: 10px; padding: 5px; border: 1px solid #374151; border-radius: 10px; color: #9ca3af; }
.toggle button { width: 40px; height: 40px; display: grid; place-items: center; border-radius: 8px; }
.toggle .on { background: #374151; color: #e5e7eb; }
.create, .start {
  display: flex;
  align-items: center;
  justify-content: center;
  gap: 10px;
  border-radius: 10px;
  font-size: 19px;
  font-weight: 600;
  color: #fff;
  background: linear-gradient(90deg, #2563eb, #9333ea);
}
.create { height: 50px; padding: 0 19px; }

/* Workflow cards */
.board { display: grid; grid-template-columns: repeat(3, 1fr); gap: 30px; padding: 30px; }
.card { border: 1px solid #374151; border-radius: 16px; background: #1b2433; overflow: hidden; }
.card-top { height: 216px; padding: 30px; background: #1f2937; border-bottom: 1px solid #374151; }
.card-title { display: flex; align-items: center; height: 38px; margin-bottom: 22px; gap: 8px; }
h2 { font-size: 22px; line-height: 32px; padding-bottom: 3px; font-weight: 600; }
.status { padding: 5px 10px; font-size: 14px; line-height: 20px; font-weight: 600; border-radius: 15px; color: #4ade80; background: #1f3338; }
.more { margin: 8px 13px 0 auto; color: #9ca3af; }
.entry { display: flex; align-items: center; gap: 10px; height: 75px; padding: 0 15px; border-radius: 10px; background: #191f2e; }
.entry-icon { width: 25px; height: 25px; display: grid; place-items: center; border-radius: 5px; color: #fff; background: linear-gradient(90deg, #3b82f6, #a855f7); }
.label { font-size: 14px; line-height: 20px; color: #9ca3af; }
.name { display: flex; align-items: center; font-size: 16px; line-height: 25px; font-weight: 600; }
.card-body { padding: 20px; }
h3 { font-size: 17px; line-height: 27px; font-weight: 600; color: #d1d5db; margin-bottom: 13px; }
.bots { display: grid; gap: 15px; }
.bot, .stat { display: flex; align-items: center; gap: 15px; border: 1px solid #374151; border-radius: 10px; background: #1f2937; padding: 0 15px; }
.bot { height: 82px; }
.bot-icon { width: 50px; height: 50px; display: grid; place-items: center; border-radius: 10px; color: #fff; }
.violet { background: linear-gradient(135deg, #a855f7, #4f46e5); }
.teal { background: linear-gradient(135deg, #3b82f6, #14b8a6); }
.tag { margin-left: 12px; padding: 2px 10px; font-size: 14px; line-height: 21px; font-weight: 400; border-radius: 13px; color: #c084fc; background: #2c2746; }
.stats { display: grid; grid-template-columns: 1fr 1fr; gap: 10px; margin: 20px 0; }
.stat { height: 87px; gap: 10px; }
.count { font-size: 22px; line-height: 35px; font-weight: 600; }
.blue { color: #60a5fa; }
.purple { color: #c084fc; }
.start { width: 100%; height: 55px; }

/* Desktop taskbar */
.taskbar {
  height: 60px;
  display: flex;
  align-items: center;
  color: #222;
  border-top: 1px solid #b8b2ac;
  background: linear-gradient(90deg, #dfe5df 0, #dae6e1 7%, #c9e8ea 10%, #dbe6e1 14%, #e5ded2 18%, #f0e0c8 26%, #ede1c9 40%, #efe0ca 46%, #e7e5d0 50%, #f2e0d0 54%, #ecddcf 70%, #efdce0 75%, #f0dcf0 80%, #f2dde0 86%, #e2e2e4 89%, #dfe4dc 94%, #cfe8ec 98%, #cfe8ec 100%);
}
.weather { display: flex; gap: 9px; padding-left: 25px; width: 365px; text-align: left; align-items: center; }
.weather-icon { position: relative; width: 30px; height: 22px; }
.weather-text { display: flex; flex-direction: column; font-size: 14px; line-height: 20px; padding-bottom: 2px; }
.weather-text small { font-size: 14px; color: #555; }
.badge {
  position: absolute;
  top: -13px;
  right: -4px;
  min-width: 20px;
  height: 20px;
  border-radius: 10px;
  font-size: 13px;
  line-height: 20px;
  text-align: center;
  color: #fff;
}
.red { background: #c42b1c; }
.blue-bg { background: #0078d4; }
.pink { background: #c81a4e; border: 1px solid #4b2a36; line-height: 18px; }
.dock { display: flex; align-items: center; }
.winstart { width: 53px; height: 29px; padding-left: 13px; }
.winstart svg { width: 29px; height: 29px; }
.search {
  width: 274px;
  height: 39px;
  margin: 0 3px 0 6px;
  display: flex;
  align-items: center;
  gap: 12px;
  padding: 0 9px 0 13px;
  border-radius: 20px;
  background: #faf5ef;
  border: 1px solid #ddd0bf;
}
.search input { flex: 1; font: 16px/24px "Open Sans", sans-serif; color: #222; }
.search input::placeholder { color: #5f5c59; opacity: 1; }
.comet { width: 58px; height: 28px; }
.app-btn { position: relative; width: 49px; height: 50px; margin: 0 3px; border-radius: 6px; display: grid; place-items: center; }
.app-btn > svg { width: 30px; height: 30px; }
.run::after, .current::after, .alert::after {
  content: "";
  position: absolute;
  bottom: 1px;
  left: calc(50% - 4px);
  width: 8px;
  height: 4px;
  border-radius: 2px;
  background: #8a8480;
}
.current { background: #f7efe8; }
.current::after { left: calc(50% - 10px); width: 20px; background: #0078d4; }
.alert { background: #e8afab; }
.alert::after { background: #c42b1c; }
.app-btn .badge { top: 3px; right: 2px; }
.tray { margin-left: auto; display: flex; align-items: center; font-size: 14px; line-height: 20px; padding-right: 24px; }
.tray-btn { width: 40px; display: grid; place-items: center; }
.lang { width: 56px; text-align: center; }
.system { display: flex; gap: 10px; padding: 0 9px; }
.clock { width: 89px; text-align: right; font-size: 15px; padding-bottom: 2px; }
.bell { margin-left: 10px; }
```
